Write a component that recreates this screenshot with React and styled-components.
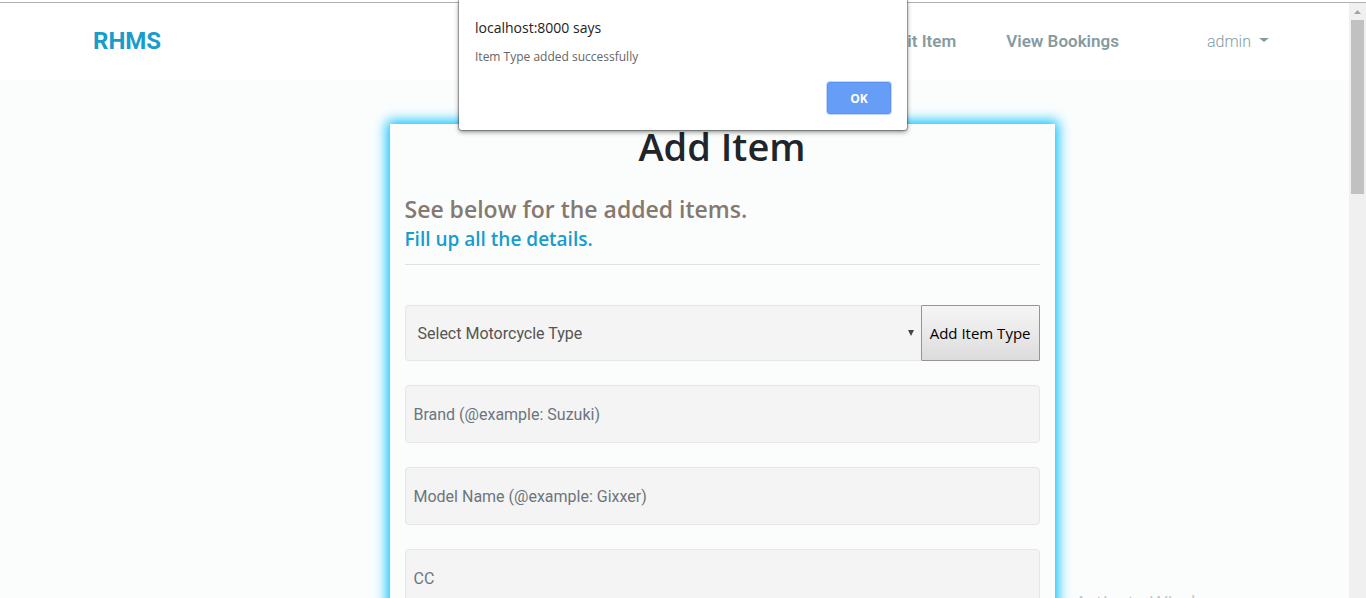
import React from "react";
import styled, { createGlobalStyle } from "styled-components";

const rubik = `Roboto, "Liberation Sans", sans-serif`;
const segoe = `"Open Sans", "Noto Sans", sans-serif`;

const GlobalStyle = createGlobalStyle`
  *, *::before, *::after { box-sizing: border-box; }
  body {
    margin: 0;
    background: #fbfdfd;
    font-family: ${rubik};
    font-size: 16px;
    line-height: 24px;
  }
`;

const Window = styled.div`
  position: relative;
  display: flex;
  flex-direction: column;
  height: 100vh;
  overflow: hidden;
`;

const TopEdge = styled.div`
  flex: none;
  height: 3px;
  background: #fff;
  border-bottom: 1px solid #b0b0b0;
`;

const Viewport = styled.div`
  flex: 1;
  display: flex;
  min-height: 0;
`;

const Page = styled.div`
  flex: 1;
  min-width: 0;
  overflow: hidden;
`;

const Scrollbar = styled.div`
  flex: none;
  width: 17px;
  padding: 0 2px;
  background: #f0f0f0;
  display: flex;
  flex-direction: column;
`;

const ScrollArrow = styled.svg`
  display: block;
  width: 13px;
  height: 17px;
`;

const ScrollThumb = styled.div`
  height: 174px;
  background: #c1c1c1;
`;

const Navbar = styled.nav`
  display: flex;
  align-items: center;
  height: 77px;
  padding: 0 80px 2px 93px;
  background: #fff;
`;

const Brand = styled.a`
  margin-right: auto;
  color: #179ccd;
  font-size: 24px;
  font-weight: 700;
  text-decoration: none;
`;

const NavLink = styled.a`
  margin-right: 50px;
  color: #869ba1;
  font-size: 17px;
  font-weight: 600;
  text-decoration: none;
`;

const UserMenu = styled.button`
  display: flex;
  align-items: center;
  gap: 8px;
  margin-left: 38px;
  padding: 2px 0 0;
  border: 0;
  background: none;
  color: #869ba1;
  font-family: ${rubik};
  font-size: 16px;
  font-weight: 300;
  line-height: 24px;

  &::after {
    content: "";
    margin-bottom: 4px;
    border: 5px solid transparent;
    border-top: 4px solid #869ba1;
    border-bottom: 0;
  }
`;

const Container = styled.main`
  display: grid;
  grid-template-columns: repeat(12, 1fr);
  max-width: 1140px;
  margin: 44px auto 0;
`;

const Card = styled.section`
  grid-column: 4 / span 7;
  padding: 0 15px 40px;
  background: #fbfdfd;
  box-shadow: 0 0 12px 3px #00bfff;
`;

const Title = styled.h1`
  margin: 0 0 26px;
  color: #212529;
  font-family: ${segoe};
  font-size: 38px;
  font-weight: 600;
  line-height: 44px;
  text-align: center;
`;

const Lead = styled.h2`
  margin: 0;
  color: #857970;
  font-family: ${segoe};
  font-size: 23px;
  font-weight: 600;
  line-height: 30px;
`;

const Hint = styled.h3`
  margin: 0;
  color: #179ccd;
  font-family: ${segoe};
  font-size: 19px;
  font-weight: 600;
  line-height: 30px;
`;

const Divider = styled.hr`
  margin: 10px 0 40px;
  border: 0;
  border-top: 1px solid #dfe1e1;
`;

const Form = styled.form`
  display: flex;
  flex-direction: column;
  gap: 24px;
`;

const TypeRow = styled.div`
  display: flex;
  height: 56px;
`;

const SelectBox = styled.div`
  position: relative;
  flex: 1;
  display: flex;
`;

const TypeSelect = styled.select`
  appearance: none;
  width: 100%;
  padding: 0 12px;
  border: 1px solid #e5e7e7;
  border-right: 0;
  border-radius: 4px 0 0 4px;
  background: #f4f4f4;
  color: #555;
  font-family: ${rubik};
  font-size: 16px;
`;

const SelectArrow = styled.svg`
  position: absolute;
  right: 7px;
  top: 25px;
  width: 6px;
  height: 6px;
  pointer-events: none;
`;

const AddTypeButton = styled.button`
  flex: none;
  padding: 0 8px;
  border: 1px solid #959595;
  border-radius: 1px;
  background: linear-gradient(#f6f6f6, #dcdcdc);
  color: #000;
  font-family: ${segoe};
  font-size: 15px;
`;

const Field = styled.input`
  width: 100%;
  height: 58px;
  padding: 0 8px;
  border: 1px solid #e5e7e7;
  border-radius: 4px;
  background: #f4f4f4;
  color: #555;
  font-family: ${rubik};
  font-size: 16px;

  &::placeholder {
    color: #6c757d;
    opacity: 1;
  }
`;

const AlertLayer = styled.div`
  position: absolute;
  top: 0;
  left: 0;
  right: 0;
  display: flex;
  justify-content: center;
  pointer-events: none;
`;

const Alert = styled.div`
  display: flex;
  flex-direction: column;
  width: 448px;
  padding: 16px;
  border-radius: 0 0 3px 3px;
  background: #fff;
  box-shadow: 0 0 1px 1px rgba(0, 0, 0, 0.3), 0 2px 5px rgba(0, 0, 0, 0.45);
  font-family: ${segoe};
  pointer-events: auto;
`;

const AlertTitle = styled.p`
  margin: 0 0 8px;
  color: #222;
  font-size: 14px;
  line-height: 24px;
`;

const AlertText = styled.p`
  margin: 0 0 16px;
  color: #666;
  font-size: 12px;
  line-height: 18px;
`;

const OkButton = styled.button`
  align-self: flex-end;
  width: 64px;
  height: 32px;
  border: 1px solid #5b93f5;
  border-radius: 3px;
  background: #669df6;
  box-shadow: 0 0 0 1px #c3d9fc;
  color: #fff;
  font-family: ${segoe};
  font-size: 12px;
  font-weight: 700;
`;

const Watermark = styled.div`
  position: absolute;
  left: calc(100% - 291px);
  top: calc(100% - 8px);
  color: #c3c5c5;
  font-family: ${segoe};
  font-size: 19px;
  line-height: 24px;
  white-space: nowrap;
  pointer-events: none;
`;

export default function App() {
  return (
    <>
      <GlobalStyle />
      <Window>
        <TopEdge />
        <Viewport>
          <Page>
            <Navbar>
              <Brand href="#home">RHMS</Brand>
              <NavLink href="#edit-item">Edit Item</NavLink>
              <NavLink href="#bookings">View Bookings</NavLink>
              <UserMenu type="button" aria-haspopup="true">admin</UserMenu>
            </Navbar>
            <Container>
              <Card>
                <Title>Add Item</Title>
                <Lead>See below for the added items.</Lead>
                <Hint>Fill up all the details.</Hint>
                <Divider />
                <Form>
                  <TypeRow>
                    <SelectBox>
                      <TypeSelect aria-label="Motorcycle type">
                        <option>Select Motorcycle Type</option>
                      </TypeSelect>
                      <SelectArrow viewBox="0 0 6 6" aria-hidden="true">
                        <path d="M0 0h6L3 6z" fill="#444" />
                      </SelectArrow>
                    </SelectBox>
                    <AddTypeButton type="button">Add Item Type</AddTypeButton>
                  </TypeRow>
                  <Field aria-label="Brand" placeholder="Brand (@example: Suzuki)" />
                  <Field aria-label="Model name" placeholder="Model Name (@example: Gixxer)" />
                  <Field aria-label="CC" placeholder="CC" />
                </Form>
              </Card>
            </Container>
          </Page>
          <Scrollbar aria-hidden="true">
            <ScrollArrow viewBox="0 0 13 17">
              <path d="M3 11h7L6.500 7z" fill="#a3a3a3" />
            </ScrollArrow>
            <ScrollThumb />
          </Scrollbar>
        </Viewport>
        <Watermark>Activate Windows</Watermark>
        <AlertLayer>
          <Alert role="alertdialog" aria-labelledby="alert-title" aria-describedby="alert-text">
            <AlertTitle id="alert-title">localhost:8000 says</AlertTitle>
            <AlertText id="alert-text">Item Type added successfully</AlertText>
            <OkButton type="button">OK</OkButton>
          </Alert>
        </AlertLayer>
      </Window>
    </>
  );
}
